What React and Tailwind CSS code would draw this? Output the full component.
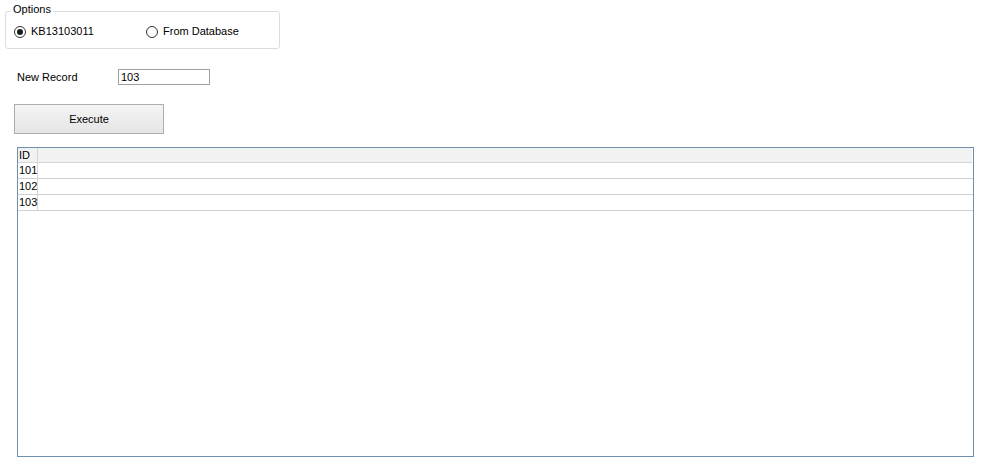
import React, { useState } from 'react';

const rows = ['101', '102', '103'];

// Classic WinForms-style radio
const Radio = ({ checked, label, onClick }) => (
  <button onClick={onClick} className="flex items-center gap-[5px] h-[14px]">
    <span className="w-[12px] h-[12px] rounded-full border border-[#333] bg-white flex items-center justify-center">
      {checked && <span className="w-[6px] h-[6px] rounded-full bg-[#1a1a1a]" />}
    </span>
    <span className="text-[11px] leading-[13px] text-black">{label}</span>
  </button>
);

export default function App() {
  const [source, setSource] = useState('file');
  const [record, setRecord] = useState('103');

  return (
    <div className="w-[982px] h-[466px] bg-white font-['Liberation_Sans',Arial,sans-serif] text-black relative">
      {/* Options group */}
      <div className="pt-[11px] pl-[5px]">
        <div className="relative w-[275px] h-[38px] border border-[#dcdcdc] rounded-[3px]">
          <span className="absolute -top-[9px] left-[5px] bg-white px-[2px] text-[11px] leading-[13px]">Options</span>
          <div className="flex items-center h-full pl-[8px] pt-[3px]">
            <div className="w-[132px]">
              <Radio checked={source === 'file'} label="KB13103011" onClick={() => setSource('file')} />
            </div>
            <Radio checked={source === 'db'} label="From Database" onClick={() => setSource('db')} />
          </div>
        </div>
      </div>

      {/* New record */}
      <div className="flex items-center mt-[20px] pl-[17px] h-[16px]">
        <span className="w-[101px] text-[11px] leading-[13px]">New Record</span>
        <input
          value={record}
          onChange={(e) => setRecord(e.target.value)}
          className="w-[92px] h-[16px] border border-[#a0a0a0] px-[2px] text-[11px] leading-[13px] outline-none"
        />
      </div>

      {/* Execute button */}
      <div className="pl-[14px] mt-[19px]">
        <button className="w-[150px] h-[30px] border border-[#adadad] bg-gradient-to-b from-[#f4f4f4] to-[#e5e5e5] text-[11px] leading-[13px]">
          Execute
        </button>
      </div>

      {/* Data grid */}
      <div className="ml-[17px] mt-[13px] w-[957px] h-[310px] border border-[#6f8fb1] bg-white">
        <div className="flex h-[15px] bg-[#f2f2f2] border-b border-[#d5d5d5] mr-[1px]">
          <div className="w-[20px] border-r border-[#d5d5d5] text-[11px] leading-[14px] pl-[1px]">ID</div>
          <div className="flex-1" />
        </div>
        {rows.map((id) => (
          <div key={id} className="flex h-[16px] border-b border-[#d0d0d0]">
            <div className="w-[20px] border-r border-[#d5d5d5] text-[11px] leading-[15px] pl-[1px]">{id}</div>
            <div className="flex-1" />
          </div>
        ))}
      </div>
    </div>
  );
}
